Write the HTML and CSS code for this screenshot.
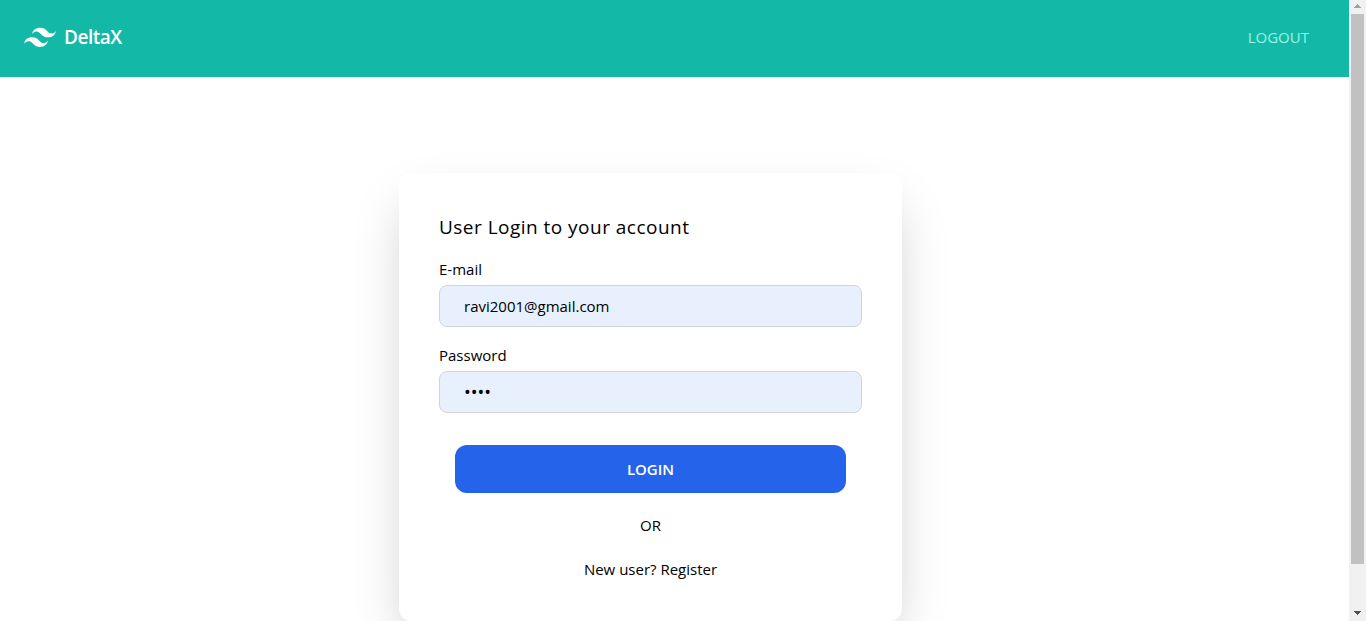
FILE: index.html
```html
<!DOCTYPE html>
<html lang="en">
<head>
<meta charset="utf-8">
<meta name="viewport" content="width=device-width, initial-scale=1">
<title>DeltaX</title>
<link rel="stylesheet" href="styles.css">
</head>
<body>
<div class="page">
  <header class="navbar">
    <div class="brand">
      <svg class="brand-logo" viewBox="0 0 54 54" fill="currentColor" aria-hidden="true"><path d="M13.5 22.1c1.8-7.2 6.3-10.8 13.5-10.8 10.8 0 12.15 8.1 17.55 9.45 3.6.9 6.75-.45 9.45-4.05-1.8 7.2-6.3 10.8-13.5 10.8-10.8 0-12.15-8.1-17.55-9.45-3.6-.9-6.75.45-9.45 4.05zM0 38.3c1.8-7.2 6.3-10.8 13.5-10.8 10.8 0 12.15 8.1 17.55 9.45 3.6.9 6.75-.45 9.45-4.05-1.8 7.2-6.3 10.8-13.5 10.8-10.8 0-12.15-8.1-17.55-9.45-3.6-.9-6.75.45-9.45 4.05z"/></svg>
      <span class="brand-name">DeltaX</span>
    </div>
    <a class="logout" href="#logout">LOGOUT</a>
  </header>
  <main class="main">
    <form class="card">
      <h1 class="title">User Login to your account</h1>
      <div class="field">
        <label for="email">E-mail</label>
        <input id="email" class="input" type="email" value="ravi2001@gmail.com">
      </div>
      <div class="field">
        <label for="password">Password</label>
        <input id="password" class="input input-password" type="password" value="1234">
      </div>
      <button class="login" type="button">LOGIN</button>
      <p class="note">OR</p>
      <p class="note"><a class="register" href="#register">New user? Register</a></p>
    </form>
  </main>
</div>
<div class="scrollbar" aria-hidden="true">
  <svg class="arrow arrow-up" viewBox="0 0 7 4" shape-rendering="crispEdges"><path d="M3 0h1v1h1v1h1v1h1v1H0V3h1V2h1V1h1z"/></svg>
  <div class="track"><div class="thumb"></div></div>
  <svg class="arrow" viewBox="0 0 7 4" shape-rendering="crispEdges"><path d="M0 0h7v1H6v1H5v1H4v1H3V3H2V2H1V1H0z"/></svg>
</div>
</body>
</html>
```
FILE: styles.css
```css
*, *::before, *::after { box-sizing: border-box; }

body {
  margin: 0;
  display: flex;
  height: 100vh;
  overflow: hidden;
  background: #fff;
  color: #000;
  font-family: "Open Sans", "Noto Sans", sans-serif;
  font-size: 15px;
  line-height: 24px;
}

h1, p { margin: 0; }
a { color: inherit; text-decoration: none; }

.page { flex: 1; min-width: 0; overflow: hidden; }

.navbar {
  display: flex;
  align-items: center;
  justify-content: space-between;
  min-height: 77px;
  padding: 16px 40px 19px 24px;
  background: #14b8a6;
}
.brand { display: flex; align-items: center; gap: 8px; color: #fff; }
.brand-logo { width: 32px; height: 32px; }
.brand-name {
  font-size: 19px;
  line-height: 28px;
  font-weight: 600;
  letter-spacing: -0.025em;
}
.logout { color: #99f6e4; }

.main { display: flex; justify-content: center; padding: 96px 48px 40px 0; }

.card {
  display: flex;
  flex-direction: column;
  width: 100%;
  max-width: 503px;
  padding: 40px;
  border-radius: 12px;
  background: #fff;
  box-shadow: 0 25px 50px -12px rgba(0, 0, 0, 0.25);
}
.title {
  font-size: 19px;
  line-height: 28px;
  font-weight: 400;
  letter-spacing: 0.025em;
}
.field { display: flex; flex-direction: column; gap: 4px; margin-top: 16px; }
.input {
  width: 100%;
  height: 42px;
  padding: 8px 24px;
  border: 1px solid #d1d5db;
  border-radius: 8px;
  background: #e8f0fe;
  color: #000;
  font: inherit;
  outline: none;
}
.input-password { font-size: 18px; }
.login {
  height: 48px;
  margin: 32px 16px 0;
  border: 0;
  border-radius: 12px;
  background: #2563eb;
  color: #fff;
  font: inherit;
  font-weight: 600;
}
.note { margin-top: 20px; text-align: center; }

.scrollbar {
  display: flex;
  flex-direction: column;
  align-items: center;
  width: 17px;
  padding: 4px 0 6px;
  background: #f1f1f1;
}
.arrow { width: 7px; height: 4px; fill: #505050; }
.arrow-up { fill: #a3a3a3; }
.track { flex: 1; width: 13px; padding: 6px 0 47px; }
.thumb { height: 100%; background: #c1c1c1; }
```
